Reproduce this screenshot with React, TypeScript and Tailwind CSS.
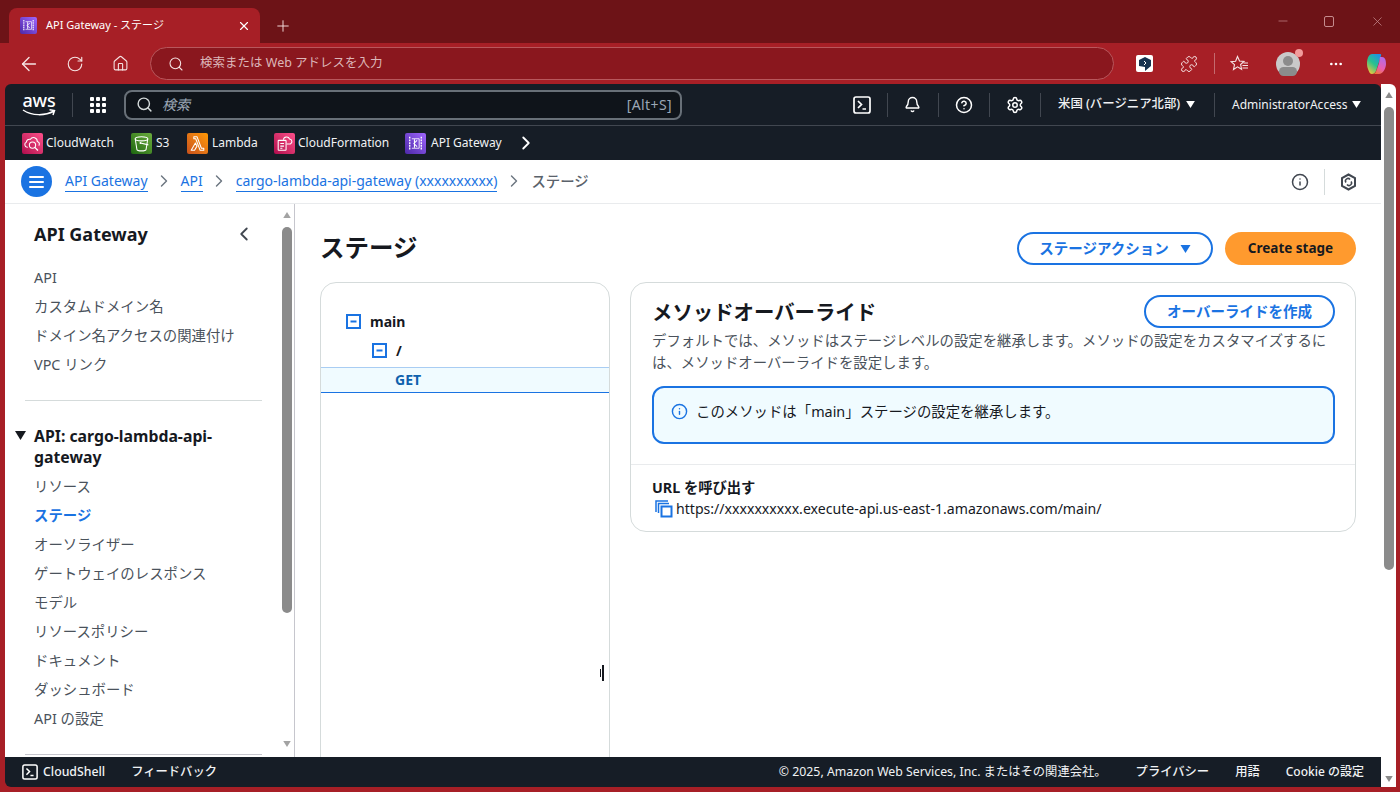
import React from "react";
import {
  ArrowLeft,
  Bell,
  ChevronLeft,
  ChevronRight,
  CircleHelp,
  Ellipsis,
  Home,
  Info,
  Minus,
  Plus,
  Puzzle,
  RotateCw,
  Search,
  Settings,
  X,
} from "lucide-react";

const sansFont = "font-['Noto_Sans','Noto_Sans_CJK_JP',sans-serif]";

const ApiGatewayGlyph = ({ size = 21 }: { size?: number }) => (
  <div
    style={{ width: size, height: size }}
    className="shrink-0 rounded-[2px] bg-linear-to-tr from-[#4d27a8] to-[#a166ff] flex items-center justify-center"
  >
    <svg width={size} height={size} viewBox="0 0 20 20" fill="none">
      <path d="M4.500 3.500v13M15.500 3.500v13" stroke="#fff" strokeWidth="1.300" strokeDasharray="1.800 0.800" />
      <path d="M6.500 5.500h7v9h-7" stroke="#fff" strokeWidth="0.800" />
      <path d="M11.500 7l-3 3 3 3M9 6v8" stroke="#fff" strokeWidth="1" />
    </svg>
  </div>
);

const CloudWatchGlyph = () => (
  <div className="w-[21px] h-[21px] shrink-0 rounded-[2px] bg-linear-to-tr from-[#b0084d] to-[#ff4f8b]">
    <svg width="21" height="21" viewBox="0 0 20 20" fill="none">
      <path d="M5.500 13.500H5a2.500 2.500 0 0 1-.8-4.800A3 3 0 0 1 8 6a3.500 3.500 0 0 1 6.500 2 2.500 2.500 0 0 1 1.500 4" stroke="#fff" strokeWidth="1" />
      <circle cx="10" cy="11.500" r="3" stroke="#fff" strokeWidth="1" />
      <path d="M12.200 13.700l3 3" stroke="#fff" strokeWidth="1.300" />
    </svg>
  </div>
);

const S3Glyph = () => (
  <div className="w-[21px] h-[21px] shrink-0 rounded-[2px] bg-linear-to-tr from-[#1b660f] to-[#6cae3e]">
    <svg width="21" height="21" viewBox="0 0 20 20" fill="none">
      <ellipse cx="10" cy="5.500" rx="6" ry="2" stroke="#fff" strokeWidth="1" />
      <path d="M4 5.500l1.600 10c.2 1 2.200 1.500 4.400 1.500s4.200-.5 4.400-1.500L16 5.500" stroke="#fff" strokeWidth="1" />
      <path d="M9 9.500l7.500 1.800" stroke="#fff" strokeWidth="1" />
      <circle cx="9" cy="9.500" r="0.900" fill="#fff" />
    </svg>
  </div>
);

const LambdaGlyph = () => (
  <div className="w-[21px] h-[21px] shrink-0 rounded-[2px] bg-linear-to-tr from-[#c8511b] to-[#ff9900]">
    <svg width="21" height="21" viewBox="0 0 20 20" fill="none">
      <path d="M6.500 3.500h3l4.200 11H16v2h-3.500L8.300 5.500H6.500zM8 9.500l1.500 3-2.300 4H4z" stroke="#fff" strokeWidth="1" strokeLinejoin="round" />
    </svg>
  </div>
);

const CloudFormationGlyph = () => (
  <div className="w-[21px] h-[21px] shrink-0 rounded-[2px] bg-linear-to-tr from-[#b0084d] to-[#ff4f8b]">
    <svg width="21" height="21" viewBox="0 0 20 20" fill="none">
      <path d="M9 6.500a3 3 0 0 1 5.800-.8 2.500 2.500 0 0 1 .7 4.800H12" stroke="#fff" strokeWidth="1" />
      <rect x="4" y="7" width="7.500" height="9.500" rx="0.500" stroke="#fff" strokeWidth="1" />
      <path d="M6 10h3.500M6 12.500h3.500M6 14.500h2" stroke="#fff" strokeWidth="1" />
    </svg>
  </div>
);

const TerminalGlyph = ({ size = 18 }: { size?: number }) => (
  <svg width={size} height={size} viewBox="0 0 18 18" fill="none" className="shrink-0">
    <rect x="1" y="1" width="16" height="16" rx="2" stroke="#fff" strokeWidth="1.700" />
    <path d="M5 5l3.500 3.500L5 12M9.500 13H13" stroke="#fff" strokeWidth="1.700" />
  </svg>
);

const MinusBox = () => (
  <svg width="15" height="15" viewBox="0 0 15 15" fill="none" className="shrink-0">
    <rect x="1" y="1" width="13" height="13" stroke="#1a73e2" strokeWidth="2" />
    <path d="M4.500 7.500h6" stroke="#1a73e2" strokeWidth="2" />
  </svg>
);

const Caret = ({ className }: { className: string }) => (
  <svg viewBox="0 0 10 8" className={className}>
    <path d="M0 0h10L5 8z" fill="currentColor" />
  </svg>
);

const Divider = () => <div className="w-px h-[24px] bg-[#414750]" />;

const ServiceLink = ({
  icon,
  label,
  className,
}: {
  icon: React.ReactNode;
  label: string;
  className: string;
}) => (
  <div className={`flex items-center ${className}`}>
    {icon}
    <span className="text-[12px] text-[#f0f2f4]">{label}</span>
  </div>
);

const Crumb = ({ label, className = "" }: { label: string; className?: string }) => (
  <span className={`text-[14px] leading-[20px] text-[#1a73e2] border-b border-[#1a73e2] ${className}`}>
    {label}
  </span>
);

const CrumbArrow = () => <ChevronRight size={20} strokeWidth={1.700} className="text-[#6c7680] mx-[-1.500px]" />;

const SideItem = ({ label, active }: { label: string; active?: boolean }) => (
  <div
    className={`h-[29px] leading-[29px] text-[14.400px] pl-[29px] ${
      active ? "text-[#1a73e2] font-bold" : "text-[#4a525b]"
    }`}
  >
    {label}
  </div>
);

const BrowserChrome = () => (
  <>
    <div className="h-[43px] bg-[#6d1317] flex items-end pl-[9px] shrink-0">
      <div className="w-[251px] h-[35px] bg-[#a71f26] rounded-t-[8px] flex items-center pl-[11px] pr-[9px]">
        <ApiGatewayGlyph size={17} />
        <span className="ml-[9px] text-[11px] text-white flex-1">API Gateway - ステージ</span>
        <X size={14} className="text-white" />
      </div>
      <div className="h-[35px] flex items-center ml-[14px]">
        <Plus size={18} strokeWidth={1.300} className="text-[#f3dcdc]" />
      </div>
      <div className="ml-auto h-[43px] flex items-center pr-[15px] pb-[1px] text-[#c58b8d]">
        <Minus size={14} strokeWidth={1.200} />
        <div className="ml-[34px] w-[10px] h-[11px] rounded-[2px] border border-[#c58b8d]" />
        <X size={15} strokeWidth={1.200} className="ml-[36px]" />
      </div>
    </div>
    <div className="h-[41px] bg-[#a71f26] flex items-center shrink-0 pl-[18px] text-[#f6e4e4]">
      <ArrowLeft size={22} strokeWidth={1.500} />
      <RotateCw size={18} strokeWidth={1.500} className="ml-[26px]" />
      <Home size={17} strokeWidth={1.500} className="ml-[28px]" />
      <div className="ml-[21px] w-[964px] h-[33px] rounded-full bg-[#8a171e] border border-[#b8575c] flex items-center pl-[17px]">
        <Search size={16} strokeWidth={1.600} className="text-[#f6e4e4]" />
        <span className="ml-[16px] text-[12.500px] text-[#dcb6b8]">検索または Web アドレスを入力</span>
      </div>
      <div className="ml-[22px] w-[17px] h-[17px] bg-white rounded-[2px] flex items-center justify-center">
        <svg width="12" height="14" viewBox="0 0 12 14">
          <path d="M6 0l6 3v6l-6 5V10L0 9V3z" fill="#16324f" />
          <path d="M5 4l2 2-2 2" stroke="#fff" fill="none" />
        </svg>
      </div>
      <Puzzle size={18} strokeWidth={1.300} className="ml-[27px]" />
      <div className="ml-[16px] w-px h-[21px] bg-[#c46a6e]" />
      <svg width="19" height="18" viewBox="0 0 19 18" fill="none" className="ml-[15px]">
        <path d="M7.500 1.500l2 4.500 4.500.5-3.400 3 1 4.800-4.100-2.400L3.500 14.500l1-4.800-3.400-3 4.500-.5z" stroke="#f6e4e4" strokeWidth="1.100" />
        <path d="M13.500 8H18M12.500 10.500H18M12.500 13H18" stroke="#f6e4e4" strokeWidth="1.100" />
      </svg>
      <div className="ml-[27px] relative w-[24px] h-[24px] rounded-full bg-[#c9c9c9] overflow-visible">
        <div className="absolute left-[7px] top-[4px] w-[10px] h-[10px] rounded-full bg-[#8b8b8b]" />
        <div className="absolute left-[3px] top-[15px] w-[18px] h-[9px] rounded-full bg-[#8b8b8b]" />
        <div className="absolute right-[-3px] top-[-3px] w-[8px] h-[8px] rounded-full bg-[#f29b9b]" />
      </div>
      <Ellipsis size={16} className="ml-[28px] text-white" />
      <svg width="24" height="24" viewBox="0 0 24 24" className="ml-[20px]">
        <defs>
          <linearGradient id="copilotLeft" x1="0.800" y1="0" x2="0.200" y2="1">
            <stop offset="0" stopColor="#1f8fe6" />
            <stop offset="0.500" stopColor="#29c28e" />
            <stop offset="1" stopColor="#f4c93a" />
          </linearGradient>
          <linearGradient id="copilotRight" x1="0.700" y1="0" x2="0.300" y2="1">
            <stop offset="0" stopColor="#b26be8" />
            <stop offset="0.600" stopColor="#ea5fb0" />
            <stop offset="1" stopColor="#f2733d" />
          </linearGradient>
        </defs>
        <path d="M8 2h8c2 0 1 2 0 5l-4 12c-1 2-2 3-4 3-2 0-3-2-4-5C2 12 3 2 8 2z" fill="url(#copilotLeft)" />
        <path d="M16 5h2c3 0 4 3 4 7s-3 10-7 10H9c2 0 3-2 4-5l2-6z" fill="url(#copilotRight)" />
      </svg>
    </div>
  </>
);

const TopNav = () => (
  <>
    <div className="h-[42px] flex items-center bg-[#161d26] border-b border-[#414750] shrink-0 rounded-t-[6px] pl-[17px]">
      <div className="w-[34px] h-[26px] shrink-0 flex flex-col items-center">
        <span className="text-[18px] leading-[17px] text-white font-medium tracking-[-0.2px]">aws</span>
        <svg width="34" height="9" viewBox="0 0 34 9" fill="none">
          <path d="M1 1c9 6 22 6 31 1M27.500 0.800L32.500 1.500 31 6" stroke="#fff" strokeWidth="1.500" />
        </svg>
      </div>
      <div className="ml-[16px] w-px h-[24px] bg-[#414750]" />
      <div className="ml-[17px] grid grid-cols-3 gap-[2px]">
        {Array.from({ length: 9 }).map((_, i) => (
          <div key={i} className="w-[4px] h-[4px] bg-white rounded-[1px]" />
        ))}
      </div>
      <div className="ml-[18px] w-[558px] h-[30px] rounded-[8px] border-2 border-[#687078] bg-[#0f141a] flex items-center pl-[10px] pr-[8px]">
        <Search size={17} strokeWidth={2} className="text-[#d5dbdb]" />
        <span className="ml-[9px] italic text-[14px] text-[#9ba7b6]">検索</span>
        <span className="ml-auto text-[14px] tracking-[0.4px] text-[#9ba7b6]">[Alt+S]</span>
      </div>
      <div className="ml-[171px]">
        <TerminalGlyph />
      </div>
      <div className="ml-[16px]">
        <Divider />
      </div>
      <Bell size={17} strokeWidth={2} className="ml-[16px] text-white" />
      <div className="ml-[17px]">
        <Divider />
      </div>
      <CircleHelp size={18} strokeWidth={2} className="ml-[16px] text-white" />
      <div className="ml-[16px]">
        <Divider />
      </div>
      <Settings size={18} strokeWidth={2} className="ml-[16px] text-white" />
      <div className="ml-[16px]">
        <Divider />
      </div>
      <span className="ml-[17px] text-[12.400px] text-[#f0f2f4] w-[123px] font-medium whitespace-nowrap">
        米国 (バージニア北部)
      </span>
      <Caret className="ml-[5px] w-[9px] h-[7px] text-white" />
      <div className="ml-[19px]">
        <Divider />
      </div>
      <span className="ml-[17px] text-[12px] text-[#f0f2f4] w-[116px]">AdministratorAccess</span>
      <Caret className="ml-[4px] w-[9px] h-[7px] text-white" />
    </div>
    <div className="h-[34px] flex items-center bg-[#161d26] shrink-0 pl-[17px]">
      <ServiceLink icon={<CloudWatchGlyph />} label="CloudWatch" className="w-[109px] gap-[3px]" />
      <ServiceLink icon={<S3Glyph />} label="S3" className="w-[56px] gap-[4px]" />
      <ServiceLink icon={<LambdaGlyph />} label="Lambda" className="w-[87px] gap-[4px]" />
      <ServiceLink icon={<CloudFormationGlyph />} label="CloudFormation" className="w-[131px] gap-[3px]" />
      <ServiceLink icon={<ApiGatewayGlyph />} label="API Gateway" className="w-[110px] gap-[5px]" />
      <ChevronRight size={22} strokeWidth={2} className="text-white" />
    </div>
  </>
);

const Breadcrumbs = () => (
  <div className="h-[44px] bg-white border-b border-[#e9ebed] flex items-center pl-[16px] pr-[24px] shrink-0">
    <div className="w-[31px] h-[31px] rounded-full bg-[#1a73e2] flex flex-col items-center justify-center gap-[3px]">
      <div className="w-[15px] h-[2px] bg-white rounded-full" />
      <div className="w-[15px] h-[2px] bg-white rounded-full" />
      <div className="w-[15px] h-[2px] bg-white rounded-full" />
    </div>
    <div className="ml-[13px] flex items-center gap-[8px]">
      <Crumb label="API Gateway" />
      <CrumbArrow />
      <Crumb label="API" />
      <CrumbArrow />
      <Crumb label="cargo-lambda-api-gateway (xxxxxxxxxx)" />
      <CrumbArrow />
      <span className="text-[14.400px] text-[#5a626b] font-medium ml-[1px]">ステージ</span>
    </div>
    <div className="ml-auto flex items-center">
      <Info size={18} strokeWidth={2} className="text-[#414750]" />
      <div className="ml-[15px] w-px h-[26px] bg-[#d5dbdb]" />
      <svg width="17" height="18" viewBox="0 0 17 18" fill="none" className="ml-[15px]">
        <path d="M8.500 1.500l6.500 3.500v8l-6.500 3.500L2 13V5z" stroke="#414750" strokeWidth="2" />
        <path d="M6 9.500a2.500 2.500 0 0 1 4-3M11 8.500a2.500 2.500 0 0 1-4 3" stroke="#414750" strokeWidth="1.500" />
      </svg>
    </div>
  </div>
);

const Sidebar = () => (
  <div className="w-[290px] shrink-0 border-r border-[#c6c6cd] bg-white flex overflow-hidden">
    <div className="w-[275px] shrink-0 flex flex-col">
      <div className="h-[59px] flex items-center justify-between pl-[29px] pr-[25px] pt-[1px] shrink-0">
        <span className="text-[18px] font-bold text-[#16191f]">API Gateway</span>
        <ChevronLeft size={22} strokeWidth={2} className="text-[#414750]" />
      </div>
      <SideItem label="API" />
      <SideItem label="カスタムドメイン名" />
      <SideItem label="ドメイン名アクセスの関連付け" />
      <SideItem label="VPC リンク" />
      <div className="ml-[20px] w-[237px] h-px bg-[#d5dbdb] mt-[21px] shrink-0" />
      <div className="relative pl-[29px] mt-[25px] text-[15.800px] leading-[21px] font-bold text-[#16191f] mb-[4px]">
        <Caret className="absolute left-[10px] top-[5px] w-[11px] h-[9px] text-[#16191f]" />
        API: cargo-lambda-api-
        <br />
        gateway
      </div>
      <SideItem label="リソース" />
      <SideItem label="ステージ" active />
      <SideItem label="オーソライザー" />
      <SideItem label="ゲートウェイのレスポンス" />
      <SideItem label="モデル" />
      <SideItem label="リソースポリシー" />
      <SideItem label="ドキュメント" />
      <SideItem label="ダッシュボード" />
      <SideItem label="API の設定" />
      <div className="ml-[20px] w-[237px] h-px bg-[#c6c6cd] mt-[21px] shrink-0" />
    </div>
    <div className="w-[13px] flex flex-col items-center pt-[8px]">
      <Caret className="w-[10px] h-[6px] text-[#a3a3a3] rotate-180" />
      <div className="mt-[9px] w-[10px] h-[386px] rounded-full bg-[#8b8b8b]" />
      <div className="flex-1" />
      <Caret className="w-[10px] h-[6px] text-[#a3a3a3] mb-[10px]" />
    </div>
  </div>
);

const TreeRow = ({ label, className }: { label: string; className: string }) => (
  <div className={`h-[29px] flex items-center gap-[9px] ${className}`}>
    <MinusBox />
    <span className="text-[14px] font-bold text-[#16191f]">{label}</span>
  </div>
);

const OutlineButton = ({ className, children }: { className: string; children: React.ReactNode }) => (
  <div
    className={`rounded-full border-2 border-[#1a73e2] bg-white flex items-center justify-center text-[14.500px] font-bold text-[#1a73e2] ${className}`}
  >
    {children}
  </div>
);

const MainPanel = () => (
  <div className="relative flex-1 bg-white pl-[25px] pr-[25px] overflow-hidden">
    <div className="h-[78px] flex items-start pt-[28px]">
      <h1 className="text-[24.500px] leading-[34px] font-bold text-[#16191f] mt-[-1px]">ステージ</h1>
      <OutlineButton className="ml-auto w-[196px] h-[33px] gap-[11px]">
        ステージアクション
        <Caret className="w-[11px] h-[8px] text-[#1a73e2]" />
      </OutlineButton>
      <div className="ml-[12px] w-[131px] h-[33px] rounded-full bg-[#ff9a2e] flex items-center justify-center text-[13.500px] font-bold text-[#16191f]">
        Create stage
      </div>
    </div>
    <div className="flex items-start gap-[20px]">
      <div className="w-[290px] h-[600px] shrink-0 rounded-[16px] border border-[#d5dbdb] pt-[24px]">
        <TreeRow label="main" className="pl-[25px]" />
        <TreeRow label="/" className="pl-[51px] mb-[2px]" />
        <div className="h-[26px] bg-[#f0fbff] border-t border-t-[#a9cdf3] border-b border-b-[#1a73e2] pl-[74px] pb-[2px] flex items-center text-[14px] font-bold text-[#0f62ae]">
          GET
        </div>
      </div>
      <div className="flex-1 h-[250px] rounded-[16px] border border-[#d5dbdb]">
        <div className="pl-[21px] pr-[20px] pt-[12px]">
          <div className="flex items-center justify-between">
            <span className="text-[20.400px] font-bold text-[#16191f] leading-[32px]">メソッドオーバーライド</span>
            <OutlineButton className="w-[191px] h-[33px]">オーバーライドを作成</OutlineButton>
          </div>
          <p className="text-[14.400px] leading-[22px] text-[#4a525b] mt-[2px]">
            デフォルトでは、メソッドはステージレベルの設定を継承します。メソッドの設定をカスタマイズするに
            <br />
            は、メソッドオーバーライドを設定します。
          </p>
          <div className="mt-[12px] h-[58px] rounded-[12px] border-2 border-[#1a73e2] bg-[#f0fbff] flex items-start pl-[17px] pt-[14px] gap-[8px]">
            <Info size={17} strokeWidth={2} className="text-[#1a73e2] mt-[1px]" />
            <span className="text-[14.400px] leading-[20px] text-[#16191f]">このメソッドは「main」ステージの設定を継承します。</span>
          </div>
        </div>
        <div className="mt-[20px] h-px bg-[#e9ebed]" />
        <div className="pl-[21px] pr-[20px] pt-[13px]">
          <div className="text-[14.300px] leading-[20px] font-bold text-[#16191f]">URL を呼び出す</div>
          <div className="flex items-center h-[22px] pl-[3px] gap-[3px]">
            <svg width="18" height="18" viewBox="0 0 18 18" fill="none" className="shrink-0">
              <path d="M1 12V1h12" stroke="#1a73e2" strokeWidth="1.500" />
              <path d="M3.500 13V3.500H14" stroke="#1a73e2" strokeWidth="1.500" />
              <rect x="6.500" y="6.500" width="10" height="10" stroke="#1a73e2" strokeWidth="2" />
            </svg>
            <span className="text-[14.100px] text-[#16191f]">https://xxxxxxxxxx.execute-api.us-east-1.amazonaws.com/main/</span>
          </div>
        </div>
      </div>
    </div>
    <div className="absolute left-[305px] top-[461px] flex items-center gap-[1px]">
      <div className="w-px h-[8px] bg-[#16191f]" />
      <div className="w-[2px] h-[16px] bg-[#16191f]" />
    </div>
  </div>
);

const Footer = () => (
  <div className="h-[30px] bg-[#161d26] rounded-bl-[6px] flex items-center pl-[17px] pr-[17px] shrink-0 text-[12.300px] text-[#f0f2f4]">
    <TerminalGlyph size={16} />
    <span className="ml-[5px] font-medium">CloudShell</span>
    <span className="ml-[26px] font-medium">フィードバック</span>
    <span className="ml-auto">© 2025, Amazon Web Services, Inc. またはその関連会社。</span>
    <span className="ml-[29px] font-medium">プライバシー</span>
    <span className="ml-[26px] font-medium">用語</span>
    <span className="ml-[26px] font-medium text-[12px]">Cookie の設定</span>
  </div>
);

const PageScrollbar = () => (
  <div className="w-[15px] shrink-0 h-full bg-white rounded-tr-[6px] flex flex-col items-center pt-[8px] pb-[5px]">
    <Caret className="w-[10px] h-[6px] text-[#8b8b8b] rotate-180" />
    <div className="mt-[9px] w-[10px] h-[463px] rounded-full bg-[#8b8b8b]" />
    <div className="flex-1" />
    <Caret className="w-[10px] h-[6px] text-[#8b8b8b]" />
  </div>
);

const App = () => {
  return (
    <div className={`w-[1400px] h-[792px] bg-[#a71f26] flex flex-col overflow-hidden ${sansFont}`}>
      <BrowserChrome />
      <div className="flex-1 min-h-0 flex pl-[5px] pb-[5px]">
        <div className="w-[1376px] shrink-0 flex flex-col min-h-0">
          <TopNav />
          <Breadcrumbs />
          <div className="flex-1 min-h-0 flex">
            <Sidebar />
            <MainPanel />
          </div>
          <Footer />
        </div>
        <PageScrollbar />
      </div>
    </div>
  );
};

export default App;
